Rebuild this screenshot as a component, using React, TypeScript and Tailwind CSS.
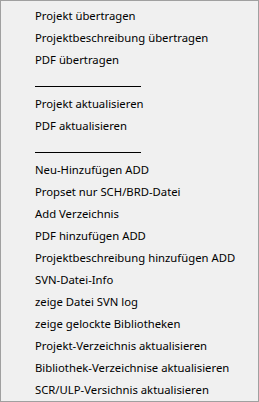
const items: (string | null)[] = [
  "Projekt übertragen",
  "Projektbeschreibung übertragen",
  "PDF übertragen",
  null,
  "Projekt aktualisieren",
  "PDF aktualisieren",
  null,
  "Neu-Hinzufügen ADD",
  "Propset nur SCH/BRD-Datei",
  "Add Verzeichnis",
  "PDF hinzufügen ADD",
  "Projektbeschreibung hinzufügen ADD",
  "SVN-Datei-Info",
  "zeige Datei SVN log",
  "zeige gelockte Bibliotheken",
  "Projekt-Verzeichnis aktualisieren",
  "Bibliothek-Verzeichnise aktualisieren",
  "SCR/ULP-Versichnis aktualisieren",
];

export default function App() {
  return (
    <div className="w-[259px] h-[402px] bg-[#f0f0f0] border border-[#a0a0a0] pt-1 text-black text-[11.3px] font-['Noto_Sans',sans-serif]">
      {items.map((label, i) =>
        label === null ? (
          <div key={i} className="h-[22px] pl-[34px] flex items-start">
            <div className="mt-[15px] w-[106px] h-px bg-black" />
          </div>
        ) : (
          <div key={i} className="h-[22px] pl-[34px] flex items-center leading-none whitespace-nowrap">
            {label}
          </div>
        )
      )}
    </div>
  );
}
